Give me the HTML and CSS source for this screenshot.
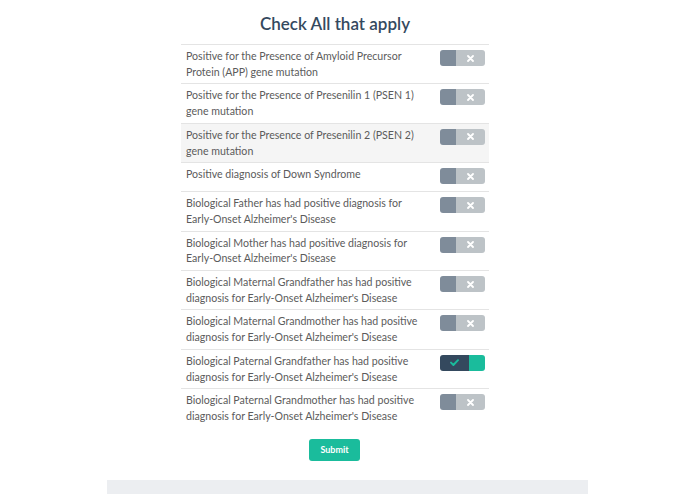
FILE: index.html
```html
<!DOCTYPE html>
<html>
<head>
<meta charset="utf-8">
<link rel="stylesheet" href="styles.css">
</head>
<body>
<div class="page">
  <div class="form">
    <h1 class="title">Check All that apply</h1>
    <div class="list">
      <div class="row"><div class="label">Positive for the Presence of Amyloid Precursor Protein (APP) gene mutation</div><div class="cell"><div class="switch off"><span class="knob"></span><span class="side"><svg width="7" height="7" viewBox="0 0 7 7"><path d="M1 1L6 6M6 1L1 6" stroke="#fff" stroke-width="1.8" stroke-linecap="round"/></svg></span></div></div></div>
      <div class="row"><div class="label">Positive for the Presence of Presenilin 1 (PSEN 1) gene mutation</div><div class="cell"><div class="switch off"><span class="knob"></span><span class="side"><svg width="7" height="7" viewBox="0 0 7 7"><path d="M1 1L6 6M6 1L1 6" stroke="#fff" stroke-width="1.8" stroke-linecap="round"/></svg></span></div></div></div>
      <div class="row hover"><div class="label">Positive for the Presence of Presenilin 2 (PSEN 2) gene mutation</div><div class="cell"><div class="switch off"><span class="knob"></span><span class="side"><svg width="7" height="7" viewBox="0 0 7 7"><path d="M1 1L6 6M6 1L1 6" stroke="#fff" stroke-width="1.8" stroke-linecap="round"/></svg></span></div></div></div>
      <div class="row"><div class="label">Positive diagnosis of Down Syndrome</div><div class="cell"><div class="switch off"><span class="knob"></span><span class="side"><svg width="7" height="7" viewBox="0 0 7 7"><path d="M1 1L6 6M6 1L1 6" stroke="#fff" stroke-width="1.8" stroke-linecap="round"/></svg></span></div></div></div>
      <div class="row"><div class="label">Biological Father has had positive diagnosis for Early-Onset Alzheimer's Disease</div><div class="cell"><div class="switch off"><span class="knob"></span><span class="side"><svg width="7" height="7" viewBox="0 0 7 7"><path d="M1 1L6 6M6 1L1 6" stroke="#fff" stroke-width="1.8" stroke-linecap="round"/></svg></span></div></div></div>
      <div class="row"><div class="label">Biological Mother has had positive diagnosis for Early-Onset Alzheimer's Disease</div><div class="cell"><div class="switch off"><span class="knob"></span><span class="side"><svg width="7" height="7" viewBox="0 0 7 7"><path d="M1 1L6 6M6 1L1 6" stroke="#fff" stroke-width="1.8" stroke-linecap="round"/></svg></span></div></div></div>
      <div class="row"><div class="label">Biological Maternal Grandfather has had positive diagnosis for Early-Onset Alzheimer's Disease</div><div class="cell"><div class="switch off"><span class="knob"></span><span class="side"><svg width="7" height="7" viewBox="0 0 7 7"><path d="M1 1L6 6M6 1L1 6" stroke="#fff" stroke-width="1.8" stroke-linecap="round"/></svg></span></div></div></div>
      <div class="row"><div class="label">Biological Maternal Grandmother has had positive diagnosis for Early-Onset Alzheimer's Disease</div><div class="cell"><div class="switch off"><span class="knob"></span><span class="side"><svg width="7" height="7" viewBox="0 0 7 7"><path d="M1 1L6 6M6 1L1 6" stroke="#fff" stroke-width="1.8" stroke-linecap="round"/></svg></span></div></div></div>
      <div class="row"><div class="label">Biological Paternal Grandfather has had positive diagnosis for Early-Onset Alzheimer's Disease</div><div class="cell"><div class="switch on"><span class="side"><svg width="9" height="7" viewBox="0 0 9 7"><path d="M1 3.6L3.4 6L8 1.2" fill="none" stroke="#1abc9c" stroke-width="1.9" stroke-linecap="round" stroke-linejoin="round"/></svg></span><span class="knob"></span></div></div></div>
      <div class="row"><div class="label">Biological Paternal Grandmother has had positive diagnosis for Early-Onset Alzheimer's Disease</div><div class="cell"><div class="switch off"><span class="knob"></span><span class="side"><svg width="7" height="7" viewBox="0 0 7 7"><path d="M1 1L6 6M6 1L1 6" stroke="#fff" stroke-width="1.8" stroke-linecap="round"/></svg></span></div></div></div>
    </div>
    <div class="actions"><button class="submit" type="button">Submit</button></div>
  </div>
  <div class="footer"></div>
</div>
</body>
</html>
```
FILE: styles.css
```css
html, body {
  margin: 0;
  padding: 0;
  background: #fff;
}
body {
  font-family: Lato, "Open Sans", sans-serif;
  color: #5b5b5b;
}
.page {
  width: 481px;
  margin: 0 auto;
}
.form {
  width: 308px;
  margin-left: 74px;
}
.title {
  margin: 0;
  padding-top: 13px;
  height: 44px;
  box-sizing: border-box;
  text-align: center;
  font-size: 17px;
  line-height: 22px;
  font-weight: 600;
  color: #34495e;
}
.list {
  display: flex;
  flex-direction: column;
}
.row {
  display: flex;
  border-top: 1px solid #e4e4e4;
  padding: 4px 4px 3px 5px;
  min-height: 21px;
}
.row.hover {
  background: #f5f5f5;
}
.label {
  width: 245px;
  flex: none;
  font-size: 10.6px;
  line-height: 15.7px;
}
.cell {
  margin-left: auto;
  width: 45px;
  flex: none;
}
.switch {
  display: flex;
  width: 45px;
  height: 16px;
  margin-top: 1px;
  border-radius: 3px;
  overflow: hidden;
}
.knob {
  width: 16px;
  flex: none;
}
.side {
  flex: 1;
  display: flex;
  align-items: center;
  justify-content: center;
}
.switch.off .knob {
  background: #7f8c9a;
}
.switch.off .side {
  background: #bdc3c7;
}
.switch.on .side {
  background: #34495e;
}
.switch.on .knob {
  background: #1abc9c;
}
.actions {
  display: flex;
  justify-content: center;
  padding-top: 11px;
  padding-right: 1px;
}
.submit {
  width: 51px;
  height: 22px;
  border: none;
  border-radius: 3px;
  background: #1abc9c;
  color: #fff;
  font-family: Lato, sans-serif;
  font-size: 9px;
  font-weight: 700;
  padding: 0;
}
.footer {
  margin-top: 19px;
  height: 20px;
  background: #eceef1;
}
```
